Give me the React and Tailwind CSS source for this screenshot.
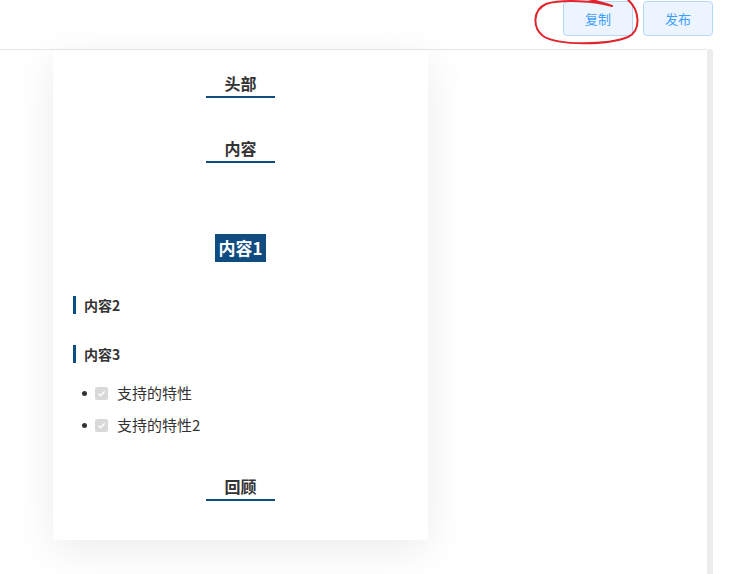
import React from "react";

const font = { fontFamily: '"Noto Sans CJK SC", "Noto Sans", sans-serif' };

function Title({ children }) {
  return (
    <div className="flex justify-center">
      <div className="inline-block border-b-2 border-[#0f4c81] px-[18px] pb-[1px] text-[16px] font-bold leading-[24px] text-[#333]">
        {children}
      </div>
    </div>
  );
}

function SubTitle({ children }) {
  return (
    <div className="flex h-[18px] items-center border-l-[3px] border-[#0f4c81] pl-[8px] text-[14px] font-bold leading-[18px] text-[#333]">
      {children}
    </div>
  );
}

function Feature({ label }) {
  return (
    <li className="flex h-[32px] items-center">
      <span className="mr-[8px] h-[5px] w-[5px] rounded-full bg-[#333]" />
      <span className="mr-[9px] flex h-[13px] w-[13px] items-center justify-center rounded-[2px] bg-[#d9d9d9]">
        <svg width="9" height="9" viewBox="0 0 10 10">
          <path d="M1.5 5.2 L4 7.5 L8.5 2.5" fill="none" stroke="#fff" strokeWidth="1.6" />
        </svg>
      </span>
      <span className="text-[15px] text-[#333]">{label}</span>
    </li>
  );
}

export default function App() {
  return (
    <div className="relative h-[574px] w-full overflow-hidden bg-white" style={font}>
      {/* top bar */}
      <div className="flex h-[49px] w-[713px] items-start justify-end gap-[10px] pt-[1px]">
        <button className="h-[35px] w-[70px] rounded-[4px] border border-[#b3d8ff] bg-[#ecf5ff] text-[13px] text-[#409eff]">
          复制
        </button>
        <button className="h-[35px] w-[70px] rounded-[4px] border border-[#b3d8ff] bg-[#ecf5ff] text-[13px] text-[#409eff]">
          发布
        </button>
      </div>

      <div className="flex">
        <div className="w-[707px] border-t border-[#e6e6e6]">
          <div className="ml-[53px] w-[375px] bg-white pb-[39px] pt-[21px] shadow-[0_10px_40px_rgba(0,0,0,0.08)]">
            <Title>头部</Title>
            <div className="mt-[38px]">
              <Title>内容</Title>
            </div>
            <div className="mt-[71px] flex justify-center">
              <div className="flex h-[28px] items-center bg-[#0f4c81] px-[3px] text-[17px] font-bold text-white">
                内容1
              </div>
            </div>
            <div className="mt-[34px] pl-[20px]">
              <SubTitle>内容2</SubTitle>
            </div>
            <div className="mt-[31px] pl-[20px]">
              <SubTitle>内容3</SubTitle>
            </div>
            <ul className="mt-[14px] pl-[29px]">
              <Feature label="支持的特性" />
              <Feature label="支持的特性2" />
            </ul>
            <div className="mt-[33px]">
              <Title>回顾</Title>
            </div>
          </div>
        </div>
        <div className="h-[530px] w-[6px] rounded-t-[3px] bg-[#ececec]" />
      </div>

      {/* hand-drawn red mark around 复制 */}
      <svg className="pointer-events-none absolute left-0 top-0" width="733" height="60">
        <path
          d="M588 -1 C600 2, 608 4, 612 6 M612 6 C595 1, 562 -1, 546 4 C533 10, 532 27, 543 36 C558 46, 608 45, 628 37 C641 31, 641 10, 626 -2"
          fill="none"
          stroke="#e0242b"
          strokeWidth="2"
          strokeLinecap="round"
        />
      </svg>
    </div>
  );
}
